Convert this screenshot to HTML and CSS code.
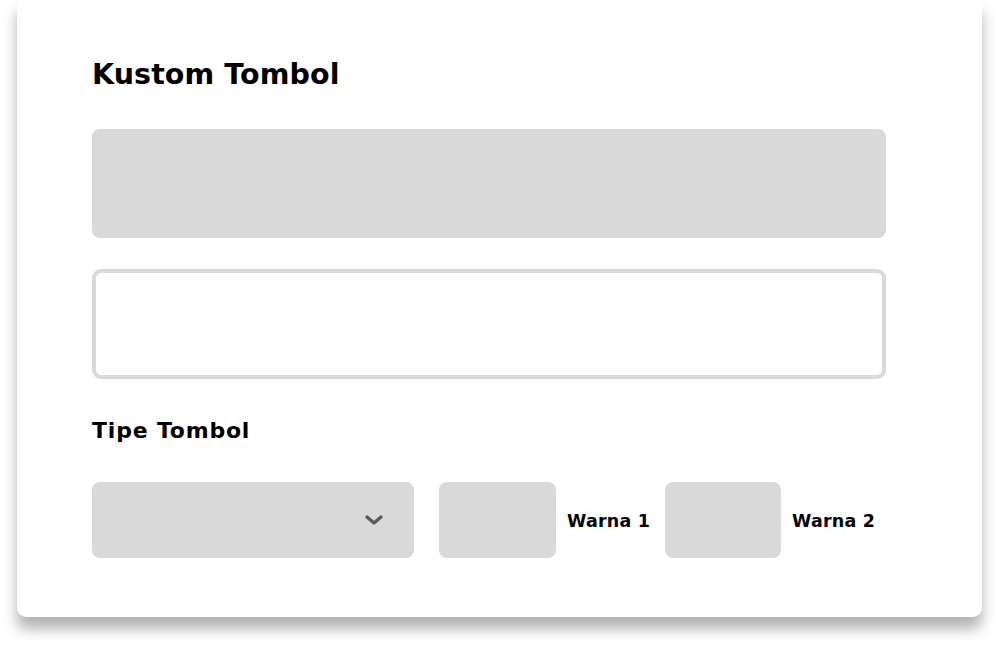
FILE: index.html
```html
<!DOCTYPE html>
<html lang="en">
  <head>
    <title>Kustom Tombol</title>
    <meta charset="UTF-8" />
    <link rel="stylesheet" href="styles.css">
  </head>
  <body>
    <div class="card">
      <h1 class="card-title">Kustom Tombol</h1>

      <div class="preview-box"></div>
      <div class="text-box"></div>

      <h2 class="section-title">Tipe Tombol</h2>

      <div class="button-options">
        <div class="select-box">
          <svg class="chevron" width="20" height="12" viewBox="0 0 20 12">
            <path d="M3 3 L10 9 L17 3" fill="none" stroke="#5e5a5a" stroke-width="3.4" stroke-linecap="round" stroke-linejoin="round" />
          </svg>
        </div>
        <div class="color-swatch first"></div>
        <span class="color-label">Warna 1</span>
        <div class="color-swatch second"></div>
        <span class="color-label">Warna 2</span>
      </div>
    </div>
  </body>
</html>
```

FILE: styles.css
```css
html,
body {
  margin: 0;
  padding: 0;
  background: #fff;
  font-family: "DejaVu Sans", sans-serif;
}

body {
  padding: 0 17px 33px;
  height: 650px;
  box-sizing: border-box;
}

.card {
  width: 965px;
  height: 617px;
  box-sizing: border-box;
  padding: 58px 96px 0 75px;
  background: #fff;
  border-radius: 0 0 9px 9px;
  box-shadow: 0 12px 14px rgba(0, 0, 0, 0.3);
}

.card-title {
  margin: 0;
  font-size: 28.5px;
  line-height: 34px;
  font-weight: bold;
  letter-spacing: 0.1px;
  color: #000;
}

.preview-box {
  margin-top: 37px;
  height: 109px;
  background: #d9d9d9;
  border-radius: 8px;
}

.text-box {
  margin-top: 31px;
  height: 110px;
  box-sizing: border-box;
  border: 4px solid #d9d9d9;
  border-radius: 9px;
}

.section-title {
  margin: 39px 0 0;
  font-size: 22px;
  line-height: 26px;
  font-weight: bold;
  letter-spacing: 0.8px;
  color: #000;
}

.button-options {
  margin-top: 38px;
  display: flex;
  align-items: center;
}

.select-box {
  width: 322px;
  height: 76px;
  background: #d9d9d9;
  border-radius: 8px;
  display: flex;
  align-items: center;
  justify-content: flex-end;
  padding-right: 30px;
  box-sizing: border-box;
}

.color-swatch {
  width: 117px;
  height: 76px;
  background: #d9d9d9;
  border-radius: 8px;
}

.color-swatch.first {
  margin-left: 25px;
}

.color-swatch.second {
  margin-left: 15px;
  width: 116px;
}

.color-label {
  margin-left: 11px;
  padding-top: 2px;
  font-size: 17.5px;
  font-weight: bold;
  letter-spacing: 0.2px;
  color: #000;
}
```
